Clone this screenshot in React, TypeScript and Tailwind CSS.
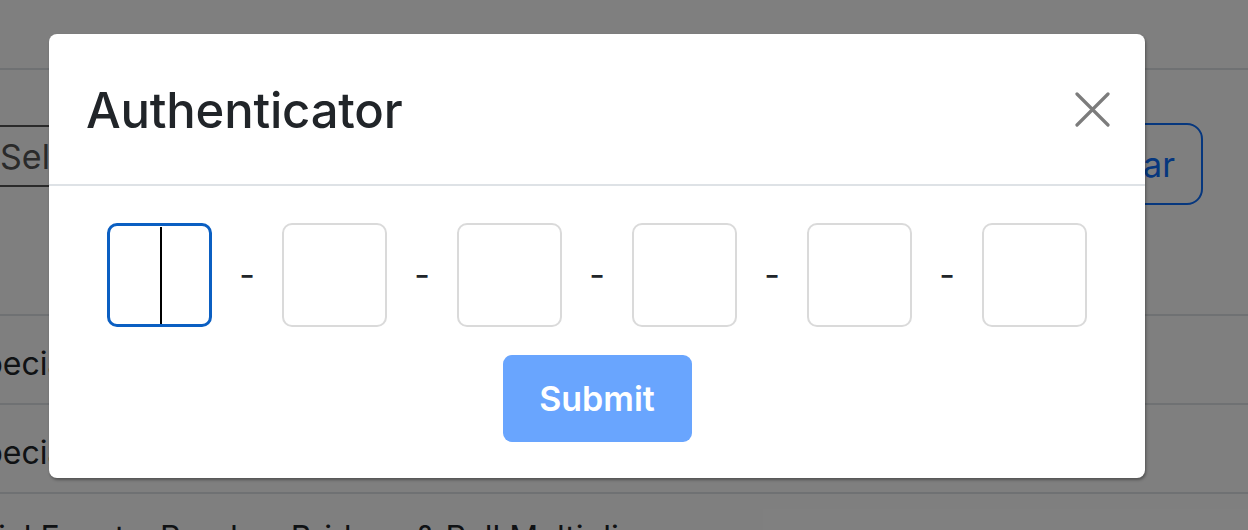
const FONT = 'font-["Inter","Liberation_Sans",sans-serif]'

const ROWS = [
  'Especial Fin de Semana: Bono',
  'Especial Promociones: Giros Gratis',
  'Special Events: Rondas, Bridges & Roll Multipliers',
]

function PageBehind() {
  return (
    <div className="flex flex-col text-[#212529]">
      <div className="h-[70px] border-b-2 border-[#dee2e6]" />
      <div className="flex h-[108px] items-start justify-between pt-[55px]">
        <div className="-ml-[40px] flex h-[62px] w-[300px] items-center border-y-2 border-[#555] pl-[40px] text-[34px] text-[#555]">
          Select...
        </div>
        <div className="mr-[45px] flex h-[82px] w-[190px] -mt-[2px] items-center justify-end rounded-[16px] border-2 border-[#0d6efd] pr-[26px] text-[34px] text-[#0d6efd]">
          Buscar
        </div>
      </div>
      <div className="h-[138px] border-b-2 border-[#dee2e6]" />
      {ROWS.map((r, i) => (
        <div
          key={r}
          className={
            'flex text-[32px] whitespace-nowrap ' +
            (i < 2
              ? '-ml-[53px] h-[89px] items-center pt-[8px] border-b-2 border-[#dee2e6]'
              : '-ml-[79px] h-[60px] items-start pt-[20px]')
          }
        >
          {r}
        </div>
      ))}
    </div>
  )
}

function CodeBox({ focused }: { focused?: boolean }) {
  return (
    <div
      className={
        focused
          ? 'relative h-[104px] w-[105px] rounded-[10px] border-[3px] border-[#0b5fc2] bg-white'
          : 'relative h-[104px] w-[105px] rounded-[10px] border-2 border-[#dadada] bg-white'
      }
    >
      {focused && <span className="absolute left-[50px] top-[1px] h-[97px] w-[2px] bg-black" />}
    </div>
  )
}

export default function App() {
  return (
    <div className={`relative h-[530px] w-[1248px] overflow-hidden bg-white ${FONT}`}>
      <PageBehind />
      <div className="absolute inset-0 bg-black/50" />

      <div className="absolute left-[49px] top-[34px] flex w-[1096px] flex-col rounded-[8px] bg-white shadow-[1px_2px_3px_rgba(0,0,0,0.35)]">
        <div className="flex h-[152px] items-center justify-between border-b-2 border-[#dee2e6] pl-[37px] pr-[35px]">
          <h1 className="text-[49px] font-medium leading-none tracking-[-0.2px] text-[#212529] mt-[2px]">
            Authenticator
          </h1>
          <button type="button" className="mt-[1px] grid size-[35px] place-items-center">
            <svg viewBox="0 0 35 35" className="size-[35px]" stroke="#7c7c7c" strokeWidth="3.2" strokeLinecap="round">
              <path d="M2 2 L33 33 M33 2 L2 33" />
            </svg>
          </button>
        </div>

        <div className="flex flex-col items-center pt-[37px] pb-[36px]">
          <div className="flex items-center">
            {[0, 1, 2, 3, 4, 5].map((i) => (
              <div key={i} className="flex items-center">
                {i > 0 && (
                  <span className="w-[70px] text-center text-[34px] leading-none text-[#212529]">-</span>
                )}
                <CodeBox focused={i === 0} />
              </div>
            ))}
          </div>
          <button
            type="button"
            className="mt-[28px] h-[87px] w-[189px] rounded-[9px] bg-[#69a5fe] text-[34px] font-semibold text-white"
          >
            Submit
          </button>
        </div>
      </div>
    </div>
  )
}
